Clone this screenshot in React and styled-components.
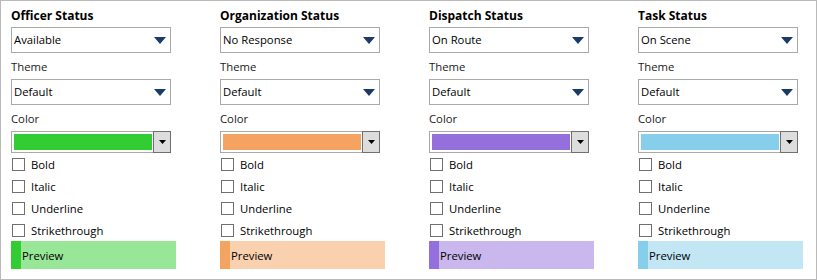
import React from 'react'
import styled, { createGlobalStyle } from 'styled-components'

const GlobalStyle = createGlobalStyle`
  html, body {
    margin: 0;
    padding: 0;
    background: #ffffff;
  }
  body {
    font-family: "Open Sans", "Noto Sans", "Liberation Sans", sans-serif;
    font-size: 11.3px;
    color: #000000;
  }
`;

const Panel = styled.div`
  box-sizing: border-box;
  width: 817px;
  height: 280px;
  border: 1px solid #b9b9b9;
  padding: 6px 0 0 10px;
  display: grid;
  grid-template-columns: repeat(4, 209px);
  overflow: hidden;
`;

const Column = styled.div`
  display: flex;
  flex-direction: column;
  width: 165px;
`;

const Title = styled.div`
  height: 20px;
  line-height: 18px;
  font-weight: 700;
  font-size: 12px;
`;

const FieldLabel = styled.div`
  height: 26px;
  line-height: 28px;
  color: #1a1a1a;
`;

const Select = styled.div`
  box-sizing: border-box;
  width: 160px;
  height: 26px;
  border: 1px solid #a9a9a9;
  background: #ffffff;
  display: flex;
  align-items: center;
  justify-content: space-between;
  padding: 0 4px 0 2px;
`;

const SelectText = styled.span`
  line-height: 24px;
`;

const ColorSelect = styled.div`
  box-sizing: border-box;
  width: 160px;
  height: 22px;
  border: 1px solid #a9a9a9;
  display: flex;
  align-items: stretch;
`;

const Swatch = styled.div`
  flex: 1;
  margin: 2px 1px 2px 2px;
  background: ${props => props.color};
`;

const DropButton = styled.div`
  box-sizing: border-box;
  width: 18px;
  margin: -1px -1px -1px 0;
  border: 1px solid #707070;
  background: #dddddd;
  display: grid;
  place-items: center;
`;

const CheckRow = styled.label`
  height: 22px;
  display: flex;
  align-items: center;
  gap: 6px;
  padding-left: 1px;
`;

const Box = styled.span`
  box-sizing: border-box;
  width: 13px;
  height: 13px;
  border: 1px solid #707070;
  background: #ffffff;
`;

const Preview = styled.div`
  width: 165px;
  height: 28px;
  display: flex;
  align-items: center;
  background: ${props => props.light};
`;

const PreviewAccent = styled.div`
  width: 10px;
  align-self: stretch;
  background: ${props => props.color};
`;

const PreviewText = styled.span`
  padding-left: 1px;
`;

const ArrowDown = () => (
  <svg width="12" height="7" viewBox="0 0 12 7">
    <polygon points="0,0 12,0 6,7" fill="#1b3a66" />
  </svg>
)

const SmallArrow = () => (
  <svg width="7" height="4" viewBox="0 0 7 4">
    <polygon points="0,0 7,0 3.5,4" fill="#000000" />
  </svg>
)

const COLUMNS = [
  { title: 'Officer Status', value: 'Available', color: '#32cd32', light: '#98e698' },
  { title: 'Organization Status', value: 'No Response', color: '#f4a460', light: '#f9d1af' },
  { title: 'Dispatch Status', value: 'On Route', color: '#9370db', light: '#c9b7ed' },
  { title: 'Task Status', value: 'On Scene', color: '#87ceeb', light: '#c3e6f5' },
]

const STYLES = ['Bold', 'Italic', 'Underline', 'Strikethrough']

function StatusColumn({ title, value, color, light }) {
  return (
    <Column>
      <Title>{title}</Title>
      <Select>
        <SelectText>{value}</SelectText>
        <ArrowDown />
      </Select>
      <FieldLabel>Theme</FieldLabel>
      <Select>
        <SelectText>Default</SelectText>
        <ArrowDown />
      </Select>
      <FieldLabel>Color</FieldLabel>
      <ColorSelect>
        <Swatch color={color} />
        <DropButton>
          <SmallArrow />
        </DropButton>
      </ColorSelect>
      {STYLES.map(style => (
        <CheckRow key={style}>
          <Box />
          <span>{style}</span>
        </CheckRow>
      ))}
      <Preview light={light}>
        <PreviewAccent color={color} />
        <PreviewText>Preview</PreviewText>
      </Preview>
    </Column>
  )
}

export default function App() {
  return (
    <>
      <GlobalStyle />
      <Panel>
        {COLUMNS.map(col => (
          <StatusColumn key={col.title} {...col} />
        ))}
      </Panel>
    </>
  )
}
